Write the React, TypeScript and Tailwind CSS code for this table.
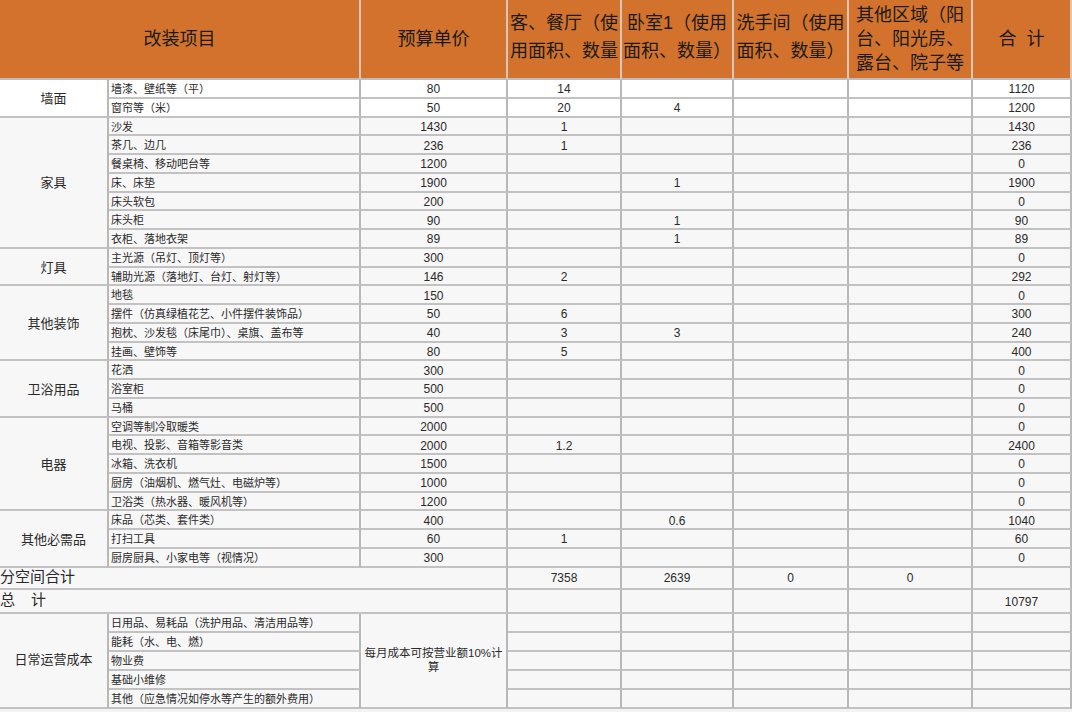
import type { ReactNode } from "react"

type Row = [string, string, string, string, string, string, string]

type Group = {
  cat: string
  span: string
  rows: Row[]
}

const groups: Group[] = [
  {
    cat: "墙面",
    span: "row-span-2",
    rows: [
      ["墙漆、壁纸等（平）", "80", "14", "", "", "", "1120"],
      ["窗帘等（米）", "50", "20", "4", "", "", "1200"],
    ],
  },
  {
    cat: "家具",
    span: "row-span-7",
    rows: [
      ["沙发", "1430", "1", "", "", "", "1430"],
      ["茶几、边几", "236", "1", "", "", "", "236"],
      ["餐桌椅、移动吧台等", "1200", "", "", "", "", "0"],
      ["床、床垫", "1900", "", "1", "", "", "1900"],
      ["床头软包", "200", "", "", "", "", "0"],
      ["床头柜", "90", "", "1", "", "", "90"],
      ["衣柜、落地衣架", "89", "", "1", "", "", "89"],
    ],
  },
  {
    cat: "灯具",
    span: "row-span-2",
    rows: [
      ["主光源（吊灯、顶灯等）", "300", "", "", "", "", "0"],
      ["辅助光源（落地灯、台灯、射灯等）", "146", "2", "", "", "", "292"],
    ],
  },
  {
    cat: "其他装饰",
    span: "row-span-4",
    rows: [
      ["地毯", "150", "", "", "", "", "0"],
      ["摆件（仿真绿植花艺、小件摆件装饰品）", "50", "6", "", "", "", "300"],
      ["抱枕、沙发毯（床尾巾）、桌旗、盖布等", "40", "3", "3", "", "", "240"],
      ["挂画、壁饰等", "80", "5", "", "", "", "400"],
    ],
  },
  {
    cat: "卫浴用品",
    span: "row-span-3",
    rows: [
      ["花洒", "300", "", "", "", "", "0"],
      ["浴室柜", "500", "", "", "", "", "0"],
      ["马桶", "500", "", "", "", "", "0"],
    ],
  },
  {
    cat: "电器",
    span: "row-span-5",
    rows: [
      ["空调等制冷取暖类", "2000", "", "", "", "", "0"],
      ["电视、投影、音箱等影音类", "2000", "1.2", "", "", "", "2400"],
      ["冰箱、洗衣机", "1500", "", "", "", "", "0"],
      ["厨房（油烟机、燃气灶、电磁炉等）", "1000", "", "", "", "", "0"],
      ["卫浴类（热水器、暖风机等）", "1200", "", "", "", "", "0"],
    ],
  },
  {
    cat: "其他必需品",
    span: "row-span-3",
    rows: [
      ["床品（芯类、套件类）", "400", "", "0.6", "", "", "1040"],
      ["打扫工具", "60", "1", "", "", "", "60"],
      ["厨房厨具、小家电等（视情况）", "300", "", "", "", "", "0"],
    ],
  },
]

const dailyCosts = [
  "日用品、易耗品（洗护用品、清洁用品等）",
  "能耗（水、电、燃）",
  "物业费",
  "基础小维修",
  "其他（应急情况如停水等产生的额外费用）",
]

const line = "border-r-2 border-b-2 border-r-[#b8b8b8] border-b-[#c2c2c2]"
const head =
  "flex items-center justify-center bg-[#d3722d] border-r-2 border-b-2 border-r-[#d8c6b8] border-b-[#bdbdbd] text-[18px] text-[#1a1a1a]"

function Cell({
  className = "",
  children,
}: {
  className?: string
  children?: ReactNode
}) {
  return <div className={`${line} ${className}`}>{children}</div>
}

export default function App() {
  return (
    <div className="h-[712px] w-[1072px] overflow-hidden bg-[#f3f3f3] font-['Liberation_Sans','Noto_Sans_CJK_SC',sans-serif] text-[#2a2a2a]">
      <div className="grid grid-cols-[109px_252px_147px_114px_112px_115px_124px_99px] grid-rows-[80px_repeat(26,18.75px)_22px_24px_repeat(5,19px)]">
        {/* header */}
        <div className={`${head} col-span-2`}>改装项目</div>
        <div className={head}>预算单价</div>
        <div className={`${head} justify-start overflow-hidden whitespace-nowrap pb-[4px] pl-[2px] leading-[28px]`}>
          <div>
            客、餐厅（使
            <br />
            用面积、数量
          </div>
        </div>
        <div className={`${head} overflow-hidden whitespace-nowrap pb-[4px] text-center leading-[28px]`}>
          <div>
            卧室1（使用
            <br />
            面积、数量）
          </div>
        </div>
        <div className={`${head} overflow-hidden whitespace-nowrap pb-[4px] text-center leading-[28px]`}>
          <div>
            洗手间（使用
            <br />
            面积、数量）
          </div>
        </div>
        <div className={`${head} overflow-hidden whitespace-nowrap text-center leading-[24px]`}>
          <div>
            其他区域（阳
            <br />
            台、阳光房、
            <br />
            露台、院子等
          </div>
        </div>
        <div className={`${head} border-r-0`}>
          合<span className="ml-[10px]">计</span>
        </div>

        {/* body */}
        {groups.map((g, gi) => {
          const bg = gi === 0 ? "bg-white" : "bg-[#f7f7f7]"
          return g.rows.map((r, ri) => (
            <div key={`${gi}-${ri}`} className="contents">
              {ri === 0 && (
                <Cell
                  className={`${g.span} ${bg} flex items-center justify-center pt-[2px] text-[13px]`}
                >
                  {g.cat}
                </Cell>
              )}
              <Cell
                className={`${bg} flex items-center overflow-hidden whitespace-nowrap pl-[2px] pt-[2px] text-[11px]`}
              >
                {r[0]}
              </Cell>
              {r.slice(1).map((v, ci) => (
                <Cell
                  key={ci}
                  className={`${bg} flex items-center justify-center pt-[2px] text-[12px] ${ci === 5 ? "border-r-0" : ""}`}
                >
                  {v}
                </Cell>
              ))}
            </div>
          ))
        })}

        {/* space subtotal */}
        <Cell className="col-span-3 flex items-center bg-[#f7f7f7] text-[15px]">
          分空间合计
        </Cell>
        {["7358", "2639", "0", "0", ""].map((v, i) => (
          <Cell
            key={i}
            className={`flex items-center justify-center bg-[#f7f7f7] text-[12px] ${i === 4 ? "border-r-0" : ""}`}
          >
            {v}
          </Cell>
        ))}

        {/* grand total */}
        <Cell className="col-span-3 flex items-center bg-[#f7f7f7] text-[15px]">
          总<span className="ml-[16px]">计</span>
        </Cell>
        {["", "", "", "", "10797"].map((v, i) => (
          <Cell
            key={i}
            className={`flex items-center justify-center bg-[#f7f7f7] pt-[2px] text-[12px] ${i === 4 ? "border-r-0" : ""}`}
          >
            {v}
          </Cell>
        ))}

        {/* daily running costs */}
        {dailyCosts.map((item, i) => (
          <div key={item} className="contents">
            {i === 0 && (
              <Cell className="row-span-5 flex items-center justify-center bg-[#f7f7f7] text-[13px]">
                日常运营成本
              </Cell>
            )}
            <Cell className="flex items-center overflow-hidden whitespace-nowrap bg-[#f7f7f7] pl-[2px] pt-[2px] text-[11px]">
              {item}
            </Cell>
            {i === 0 && (
              <Cell className="row-span-5 flex items-center justify-center bg-[#f7f7f7] text-center text-[11.5px] leading-[14px]">
                <div>
                  每月成本可按营业额10%计
                  <br />
                  算
                </div>
              </Cell>
            )}
            {[0, 1, 2, 3, 4].map((c) => (
              <Cell
                key={c}
                className={`bg-[#f7f7f7] ${c === 4 ? "border-r-0" : ""}`}
              />
            ))}
          </div>
        ))}
      </div>
    </div>
  )
}
